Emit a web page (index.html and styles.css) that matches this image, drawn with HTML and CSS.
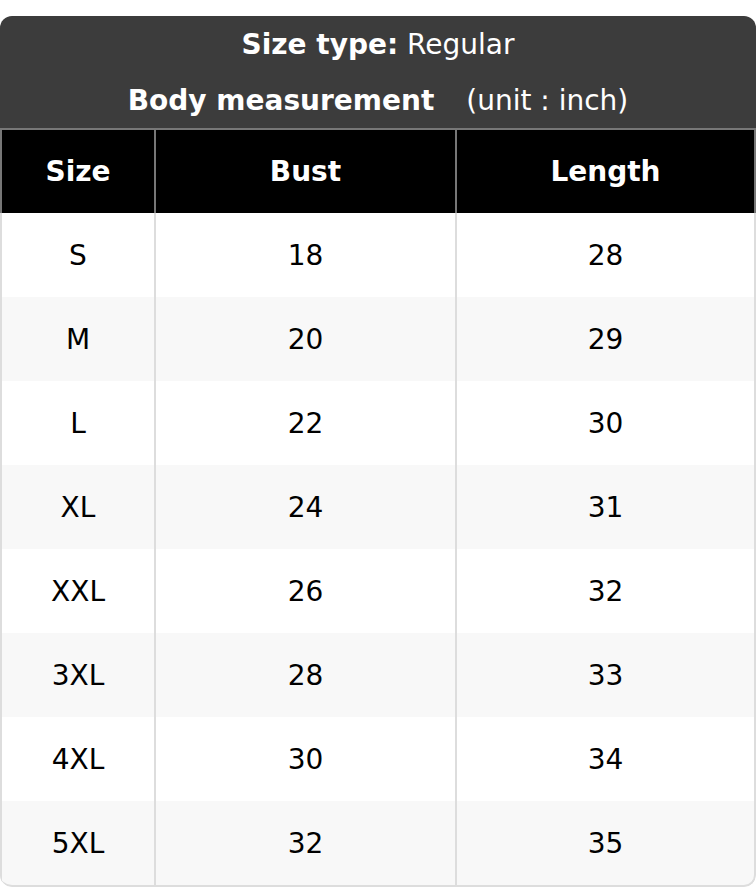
FILE: index.html
```html
<!DOCTYPE html>
<html>
<head>
<meta charset="utf-8">
<link rel="stylesheet" href="styles.css">
</head>
<body>
<div class="card">
  <div class="head">
    <div class="head-line"><b>Size type:</b> Regular</div>
    <div class="head-line"><b>Body measurement</b> <span class="unit">(unit : inch)</span></div>
  </div>
  <div class="row row-th">
    <div class="cell">Size</div>
    <div class="cell">Bust</div>
    <div class="cell">Length</div>
  </div>
  <div class="row"><div class="cell">S</div><div class="cell">18</div><div class="cell">28</div></div>
  <div class="row alt"><div class="cell">M</div><div class="cell">20</div><div class="cell">29</div></div>
  <div class="row"><div class="cell">L</div><div class="cell">22</div><div class="cell">30</div></div>
  <div class="row alt"><div class="cell">XL</div><div class="cell">24</div><div class="cell">31</div></div>
  <div class="row"><div class="cell">XXL</div><div class="cell">26</div><div class="cell">32</div></div>
  <div class="row alt"><div class="cell">3XL</div><div class="cell">28</div><div class="cell">33</div></div>
  <div class="row"><div class="cell">4XL</div><div class="cell">30</div><div class="cell">34</div></div>
  <div class="row alt last"><div class="cell">5XL</div><div class="cell">32</div><div class="cell">35</div></div>
</div>
</body>
</html>
```

FILE: styles.css
```css
html, body {
  margin: 0;
  padding: 0;
  background: #ffffff;
}
body {
  font-family: "DejaVu Sans", "Liberation Sans", sans-serif;
  font-size: 28px;
  color: #000;
}
.card {
  margin-top: 16px;
  width: 756px;
  border-radius: 12px;
  overflow: hidden;
  background: #ffffff;
}
.head {
  background: #3c3c3c;
  color: #ffffff;
}
.head-line {
  height: 56px;
  display: flex;
  align-items: center;
  justify-content: center;
  white-space: pre;
}
.unit {
  margin-left: 32px;
}
.row {
  display: grid;
  grid-template-columns: 154px 301px 1fr;
  height: 84px;
  border-right: 2px solid #dddddd;
  background: #ffffff;
}
.row.alt {
  background: #f8f8f8;
}
.cell {
  border-left: 2px solid #dddddd;
  display: flex;
  align-items: center;
  justify-content: center;
}
.row-th {
  background: #000000;
  color: #ffffff;
  font-weight: bold;
  height: 83px;
  border-top: 2px solid #777777;
  border-right-color: #777777;
}
.row-th .cell {
  border-left-color: #777777;
}
.row.last {
  border-bottom: 2px solid #dddddd;
  border-radius: 0 0 12px 12px;
}
```
